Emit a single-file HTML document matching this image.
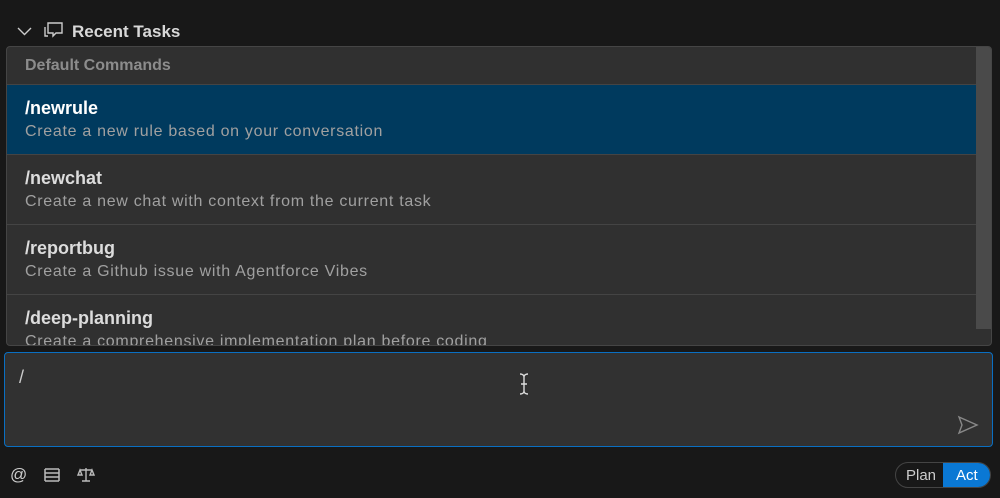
<!DOCTYPE html>
<html><head><style>
*{margin:0;padding:0;box-sizing:border-box}
body{width:1000px;height:498px;background:#181818;font-family:"Liberation Sans",sans-serif;position:relative;overflow:hidden;color:#ccc}
.hdr{position:absolute;left:17px;top:21px;font-size:17px;font-weight:bold;color:#d8d8d8}
.pop{position:absolute;left:6px;top:46px;width:986px;height:300px;background:#303030;border:1px solid #454545;border-radius:4px;overflow:hidden}
.sb{position:absolute;right:0;top:0;width:15px;height:282px;background:#4a4a4a}
.dc{height:38px;border-bottom:1px solid #444;padding:10px 0 0 18px;font-size:16px;font-weight:bold;color:#8c8c8c;width:969px}
.it{height:70px;border-bottom:1px solid #444;padding:13px 0 0 18px;width:969px}
.it b{display:block;font-size:18px;color:#dcdcdc;margin-bottom:4px}
.it span{font-size:16px;color:#a0a0a0;letter-spacing:0.7px}
.sel{background:#003a5e}
.sel b{color:#fff}
.inp{position:absolute;left:4px;top:352px;width:989px;height:95px;background:#313131;border:1.5px solid #0a6fc2;border-radius:4px}
.pill{position:absolute;left:895px;top:462px;width:96px;height:26px;border:1px solid #444;border-radius:13px;overflow:hidden;font-size:15px}
</style></head><body>
<div class="hdr"><svg width="15" height="10" style="margin-right:12px;vertical-align:1px" viewBox="0 0 15 10"><path d="M1 2l6.5 6.5L14 2" stroke="#ccc" stroke-width="1.4" fill="none"/></svg><svg width="20" height="20" viewBox="0 0 20 20" style="vertical-align:-4px;margin-right:8px"><path d="M4 2h14v10h-6l-3 3v-3H4z" stroke="#ccc" stroke-width="1.4" fill="none"/><path d="M1 6v9h3" stroke="#ccc" stroke-width="1.4" fill="none"/></svg>Recent Tasks</div>
<div class="pop"><div class="sb"></div>
<div class="dc">Default Commands</div>
<div class="it sel"><b>/newrule</b><span>Create a new rule based on your conversation</span></div>
<div class="it"><b>/newchat</b><span>Create a new chat with context from the current task</span></div>
<div class="it"><b>/reportbug</b><span>Create a Github issue with Agentforce Vibes</span></div>
<div class="it"><b>/deep-planning</b><span>Create a comprehensive implementation plan before coding</span></div>
</div>
<div class="inp"><div style="position:absolute;left:14px;top:14px;font-size:18px;color:#ccc">/</div>
<svg style="position:absolute;left:513px;top:20px" width="12" height="22" viewBox="0 0 12 22"><path d="M2 1c2 0 4 1 4 3v14c0 2-2 3-4 3M10 1c-2 0-4 1-4 3v14c0 2 2 3 4 3M3 11h6" stroke="#ddd" stroke-width="1.4" fill="none"/></svg>
<svg style="position:absolute;left:952px;top:62px" width="22" height="20" viewBox="0 0 22 20"><path d="M2 2l18 8-18 8 3-8z" stroke="#888" stroke-width="1.4" fill="none"/></svg></div>
<div style="position:absolute;left:10px;top:465px;font-size:17px;color:#ccc">@</div>
<svg style="position:absolute;left:44px;top:467px" width="16" height="16" viewBox="0 0 16 16"><path d="M1 2h14M1 6h14M1 10h14M1 14h14M1 2v12M15 2v12" stroke="#bbb" stroke-width="1.5" fill="none"/></svg>
<svg style="position:absolute;left:77px;top:466px" width="18" height="18" viewBox="0 0 18 18"><path d="M9 2v13M3 4h12M3 4l-2 5h4zM15 4l-2 5h4zM5 15h8" stroke="#bbb" stroke-width="1.4" fill="none"/></svg>
<div class="pill"><span style="position:absolute;left:10px;top:4px;color:#ccc">Plan</span><div style="position:absolute;left:47px;top:0;width:49px;height:26px;background:#0a78d4;color:#fff;padding:4px 0 0 13px">Act</div></div>
</body></html>
